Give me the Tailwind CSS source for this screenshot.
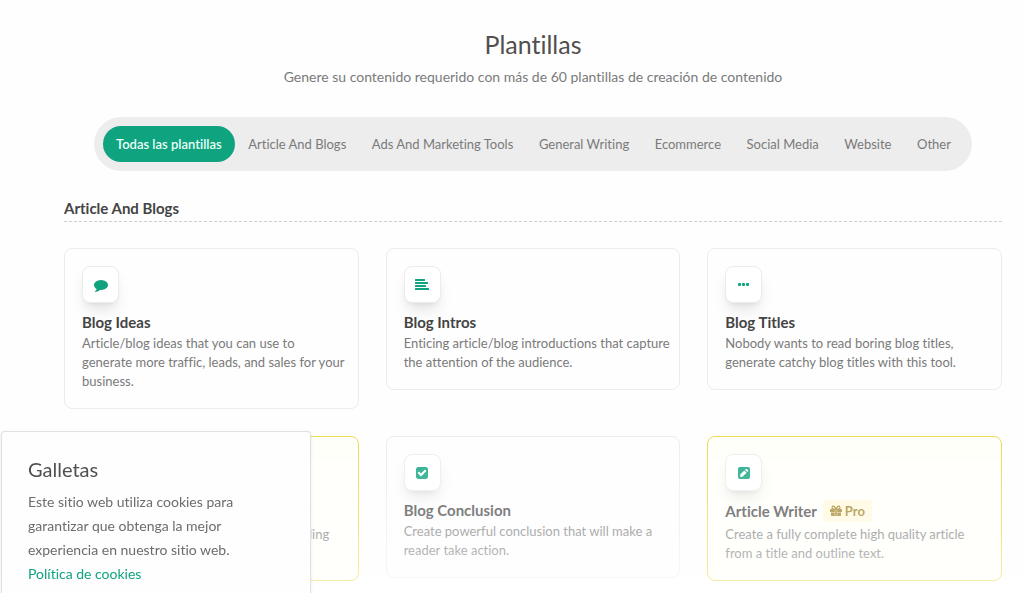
<!DOCTYPE html>
<html lang="es">
<head>
    <meta charset="utf-8">
    <meta name="viewport" content="width=device-width, initial-scale=1">
    <title>Plantillas</title>
    <script src="https://cdn.jsdelivr.net/npm/@tailwindcss/browser@4"></script>
</head>
<body class="bg-[#fefefe] font-[Lato,sans-serif] text-sm text-[#7a7a7a] [font-variant-ligatures:none]">
    <main class="pl-16 pr-[22px] pt-7 pb-4">
        <header class="text-center">
            <h1 class="text-[25px] leading-8 text-[#505050]">Plantillas</h1>
            <p class="mt-[5px] leading-6">Genere su contenido requerido con más de 60 plantillas de creación de contenido</p>
        </header>

        <!-- Category filter -->
        <nav class="mx-[30px] mt-7 flex justify-between rounded-full bg-[#ededed] p-[9px] text-[13px] leading-9 whitespace-nowrap">
            <button type="button" class="rounded-full bg-[#10a37f] px-[13px] font-semibold text-[#e9fff8]">Todas las plantillas</button>
            <button type="button" class="px-3">Article And Blogs</button>
            <button type="button" class="px-3">Ads And Marketing Tools</button>
            <button type="button" class="px-3">General Writing</button>
            <button type="button" class="px-3">Ecommerce</button>
            <button type="button" class="px-3">Social Media</button>
            <button type="button" class="px-3">Website</button>
            <button type="button" class="px-3">Other</button>
        </nav>

        <section>
            <h2 class="mt-[25px] border-b border-dashed border-[#cfcfcf] pb-px text-[15px] leading-6 font-bold text-[#444]">Article And Blogs</h2>

            <div class="mt-[26px] grid grid-cols-3 items-start gap-[27px] text-[13px] leading-[19px]">
                <article class="rounded-lg border border-[#ececec] py-[17px] pr-1 pl-[17px]">
                    <div class="flex size-[37px] items-center justify-center rounded-lg border border-[#ececec] bg-white text-[#10a37f] shadow-lg">
                        <svg class="size-[14px]" viewBox="0 0 1792 1792" fill="currentColor"><path d="M1792 896q0 174-120 321.5t-326 233-450 85.5q-70 0-145-8-198 175-460 242-49 14-114 22-17 2-30.5-9t-17.5-29v-1q-3-4-.5-12t2-10 4.500-9.500l6-9 7-8.500 8-9q7-8 31-34.500t34.500-38 31-39.500 32.500-51 27-59 26-76q-157-89-247.500-220t-90.500-281q0-174 120-321.500t326-233 450-85.500 450 85.500 326 233 120 321.500z"/></svg>
                    </div>
                    <h3 class="mt-[7px] text-[15px] leading-6 font-bold text-[#444]">Blog Ideas</h3>
                    <p>Article/blog ideas that you can use to<br>generate more traffic, leads, and sales for your business.</p>
                </article>

                <article class="rounded-lg border border-[#ececec] py-[17px] pr-1 pl-[17px]">
                    <div class="flex size-[37px] items-center justify-center rounded-lg border border-[#ececec] bg-white text-[#10a37f] shadow-lg">
                        <svg class="size-[14px]" viewBox="0 0 14 14" fill="currentColor"><rect y="1" width="10" height="2" rx=".5"/><rect y="4" width="13" height="2" rx=".5"/><rect y="7" width="11" height="2" rx=".5"/><rect y="10" width="14" height="2" rx=".5"/></svg>
                    </div>
                    <h3 class="mt-[7px] text-[15px] leading-6 font-bold text-[#444]">Blog Intros</h3>
                    <p>Enticing article/blog introductions that capture the attention of the audience.</p>
                </article>

                <article class="rounded-lg border border-[#ececec] py-[17px] pr-1 pl-[17px]">
                    <div class="flex size-[37px] items-center justify-center rounded-lg border border-[#ececec] bg-white text-[#10a37f] shadow-lg">
                        <svg class="size-[14px]" viewBox="0 0 14 14" fill="currentColor"><rect x="1" y="5" width="3" height="3" rx="1"/><rect x="5" y="5" width="3" height="3" rx="1"/><rect x="9" y="5" width="3" height="3" rx="1"/></svg>
                    </div>
                    <h3 class="mt-[7px] text-[15px] leading-6 font-bold text-[#444]">Blog Titles</h3>
                    <p>Nobody wants to read boring blog titles,<br>generate catchy blog titles with this tool.</p>
                </article>

                <article class="rounded-lg border border-[#ecd842] bg-[#fffffa] py-[17px] pr-1 pl-[17px]">
                    <div class="flex size-[37px] items-center justify-center rounded-lg border border-[#ececec] bg-white text-[#10a37f] shadow-lg">
                        <svg class="size-[14px]" viewBox="0 0 14 14" fill="currentColor"><rect y="1" width="14" height="2"/><rect y="6" width="14" height="2"/><rect y="11" width="14" height="2"/></svg>
                    </div>
                    <h3 class="mt-[6px] text-[15px] leading-7 font-bold text-[#444]">Blog Section</h3>
                    <p>Write a few paragraphs about a subheading<br>of your article.</p>
                </article>

                <article class="rounded-lg border border-[#ececec] py-[17px] pr-1 pl-[17px]">
                    <div class="flex size-[37px] items-center justify-center rounded-lg border border-[#ececec] bg-white text-[#10a37f] shadow-lg">
                        <svg class="size-[14px]" viewBox="0 0 1792 1792" fill="currentColor"><path d="M813 1299l614-614q19-19 19-45t-19-45l-102-102q-19-19-45-19t-45 19l-467 467-211-211q-19-19-45-19t-45 19l-102 102q-19 19-19 45t19 45l358 358q19 19 45 19t45-19zm851-883v960q0 119-84.500 203.500t-203.500 84.500h-960q-119 0-203.500-84.500t-84.500-203.500v-960q0-119 84.500-203.500t203.500-84.500h960q119 0 203.500 84.500t84.500 203.500z"/></svg>
                    </div>
                    <h3 class="mt-[7px] text-[15px] leading-6 font-bold text-[#444]">Blog Conclusion</h3>
                    <p>Create powerful conclusion that will make a<br>reader take action.</p>
                </article>

                <article class="rounded-lg border border-[#ecd842] bg-[#fffffa] py-[17px] pr-1 pl-[17px]">
                    <div class="flex size-[37px] items-center justify-center rounded-lg border border-[#ececec] bg-white text-[#10a37f] shadow-lg">
                        <svg class="size-[14px]" viewBox="0 0 14 14"><rect x="1" y="1" width="12" height="12" rx="2" fill="currentColor"/><path d="M3.200 10.800V8.500l4.100-4.100 2.300 2.300-4.100 4.100zM8 3.700l.8-.8q.5-.4 1 0l1.300 1.300q.4.500 0 1l-.8.800z" fill="#fff"/></svg>
                    </div>
                    <h3 class="mt-[6px] flex items-center gap-[6px] text-[15px] leading-7 font-bold text-[#444]">
                        Article Writer
                        <span class="flex items-center gap-[3px] rounded bg-[#fff9dc] px-[7px] text-[13px] leading-[22px] text-[#9d7f1e]">
                            <svg class="size-3" viewBox="0 0 12 12" fill="currentColor"><path d="M.5 4h4.300v3H0V4.500zM7.200 4h4.300l.5.500V7H7.200zM1 7.500h3.800V11H1.500L1 10.500zM7.200 7.500H11v3l-.5.500H7.200zM5.200 4h1.600v7H5.200z"/><path d="M6 4H3.300a1.400 1.400 0 1 1 1.200-2.300zM6 4h2.700a1.400 1.400 0 1 0-1.200-2.300z" fill="none" stroke="currentColor" stroke-width="1.200"/></svg>
                            Pro
                        </span>
                    </h3>
                    <p>Create a fully complete high quality article<br>from a title and outline text.</p>
                </article>
            </div>
        </section>
    </main>

    <!-- Fade over the end of the list -->
    <div class="pointer-events-none fixed inset-x-0 bottom-0 h-48 bg-linear-to-t from-white/55 to-transparent"></div>

    <!-- Cookie notice -->
    <aside class="fixed bottom-0 left-px w-[310px] rounded-t border border-b-0 border-[#e2e2e2] bg-[#fefefe] pt-[25px] pr-10 pb-[7px] pl-[26px] shadow-sm">
        <h2 class="text-xl leading-6 text-[#505050]">Galletas</h2>
        <p class="mt-[9px] leading-6 text-[#6c6c6c]">Este sitio web utiliza cookies para garantizar que obtenga la mejor experiencia en nuestro sitio web. <a href="#" class="block text-[#10a37f]">Política de cookies</a></p>
    </aside>
</body>
</html>
